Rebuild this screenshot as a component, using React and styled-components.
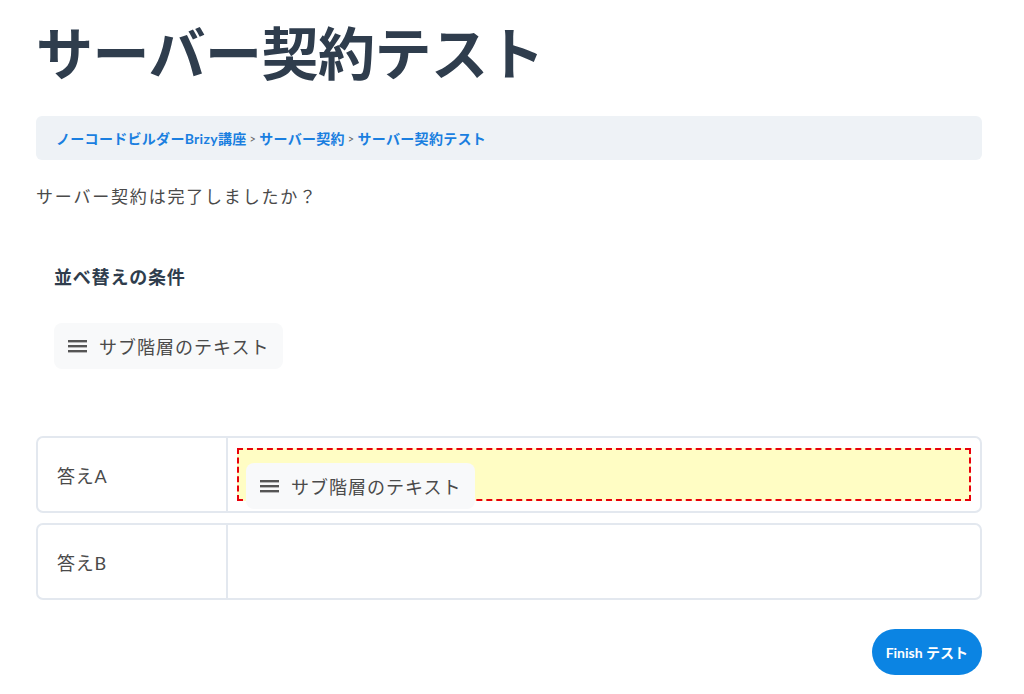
import React from "react";
import styled, { createGlobalStyle } from "styled-components";

const GlobalStyle = createGlobalStyle`
  body {
    margin: 0;
    background: #ffffff;
    font-family: "Lato", "Noto Sans CJK JP", sans-serif;
    color: #444444;
  }
`;

const Page = styled.div`
  padding: 0 42px 0 36px;
  box-sizing: border-box;
  width: 1024px;
`;

const Title = styled.h1`
  margin: 0;
  padding-top: 13px;
  font-size: 57px;
  line-height: 80px;
  font-weight: 700;
  color: #2f3d4d;
  letter-spacing: -0.5px;
`;

const Breadcrumb = styled.nav`
  margin-top: 23px;
  height: 44px;
  background: #eef2f6;
  border-radius: 6px;
  display: flex;
  align-items: center;
  padding: 0 20px;
  font-size: 14px;
  font-weight: 700;
  letter-spacing: 0.3px;
`;

const Crumb = styled.a`
  color: #1a7fe0;
  text-decoration: none;
`;

const Sep = styled.span`
  color: #666;
  font-size: 11px;
  font-weight: 400;
  margin: 0 3px;
`;

const Question = styled.p`
  margin: 24px 0 0;
  font-size: 17px;
  line-height: 26px;
  letter-spacing: 1.8px;
  color: #4a4a4a;
`;

const Conditions = styled.div`
  padding: 54px 18px 0;
`;

const CondTitle = styled.h3`
  margin: 0;
  font-size: 18px;
  line-height: 26px;
  font-weight: 700;
  letter-spacing: 0.8px;
  color: #2f3d4d;
`;

const ItemList = styled.div`
  margin-top: 33px;
  display: flex;
`;

const DragItem = styled.div`
  display: inline-flex;
  align-items: center;
  gap: 12px;
  height: 46px;
  padding: 0 14px;
  background: #f8f9fa;
  border-radius: 8px;
  font-size: 18px;
  letter-spacing: 1px;
  color: #4a4a4a;
  box-sizing: border-box;
  white-space: nowrap;
  margin-top: ${(p) => p.$offset || 0}px;
`;

const Table = styled.div`
  margin-top: 67px;
  display: flex;
  flex-direction: column;
  gap: 10px;
`;

const Row = styled.div`
  display: grid;
  grid-template-columns: 190px 1fr;
  height: 77px;
  border: 2px solid #e3e8ef;
  border-radius: 7px;
  box-sizing: border-box;
`;

const Label = styled.div`
  display: flex;
  align-items: center;
  padding-left: 19px;
  font-size: 18px;
  letter-spacing: 0.8px;
  color: #4a4a4a;
  border-right: 2px solid #e3e8ef;
`;

const Cell = styled.div`
  padding: 10px 9px 0 9px;
`;

const DropZone = styled.div`
  height: 53px;
  box-sizing: border-box;
  border: 2px dashed #e8000b;
  background: #fffdc4;
  padding-left: 7px;
`;

const Footer = styled.div`
  display: flex;
  justify-content: flex-end;
  margin-top: 29px;
`;

const FinishButton = styled.button`
  height: 46px;
  padding: 0 14px;
  border: none;
  border-radius: 23px;
  background: #0b84e3;
  color: #ffffff;
  font-family: "Lato", "Noto Sans CJK JP", sans-serif;
  font-size: 14px;
  font-weight: 700;
  cursor: pointer;
`;

const Burger = () => (
  <svg width="19" height="14" viewBox="0 0 19 14">
    <rect x="0" y="1" width="19" height="2.4" fill="#555" />
    <rect x="0" y="6" width="19" height="2.4" fill="#555" />
    <rect x="0" y="11" width="19" height="2.4" fill="#555" />
  </svg>
);

export default function App() {
  return (
    <>
      <GlobalStyle />
      <Page>
        <Title>サーバー契約テスト</Title>
        <Breadcrumb>
          <Crumb href="#">ノーコードビルダーBrizy講座</Crumb>
          <Sep>&gt;</Sep>
          <Crumb href="#">サーバー契約</Crumb>
          <Sep>&gt;</Sep>
          <Crumb href="#">サーバー契約テスト</Crumb>
        </Breadcrumb>
        <Question>サーバー契約は完了しましたか？</Question>
        <Conditions>
          <CondTitle>並べ替えの条件</CondTitle>
          <ItemList>
            <DragItem>
              <Burger />
              サブ階層のテキスト
            </DragItem>
          </ItemList>
        </Conditions>
        <Table>
          <Row>
            <Label>答えA</Label>
            <Cell>
              <DropZone>
                <DragItem $offset={13}>
                  <Burger />
                  サブ階層のテキスト
                </DragItem>
              </DropZone>
            </Cell>
          </Row>
          <Row>
            <Label>答えB</Label>
            <Cell />
          </Row>
        </Table>
        <Footer>
          <FinishButton>Finish テスト</FinishButton>
        </Footer>
      </Page>
    </>
  );
}
